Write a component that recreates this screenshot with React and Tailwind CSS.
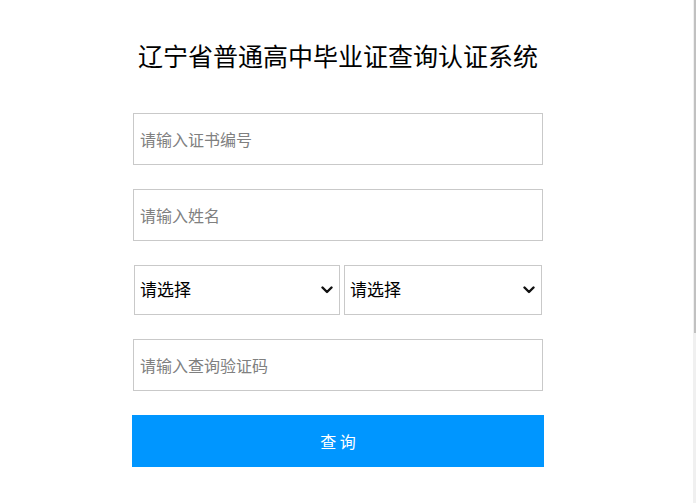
import { useState } from "react";

const FONT = { fontFamily: '"Microsoft YaHei", "Noto Sans CJK SC", "Noto Sans", sans-serif' };

function Chevron() {
  return (
    <svg
      className="pointer-events-none absolute right-[7px] top-1/2 -translate-y-1/2"
      width="12"
      height="8"
      viewBox="0 0 12 8"
      fill="none"
    >
      <path d="M1.5 1.5 L6 6 L10.5 1.5" stroke="#111" strokeWidth="2.4" strokeLinecap="round" strokeLinejoin="round" />
    </svg>
  );
}

export default function App() {
  const [sheng, setSheng] = useState("");
  const [shi, setShi] = useState("");

  return (
    <div className="min-h-[503px] bg-white" style={FONT}>
      <div className="pl-[132px] pt-[38px]">
        <div className="w-[412px]">
          <h1 className="h-[34px] text-center text-[25px] leading-[34px] font-normal text-black">辽宁省普通高中毕业证查询认证系统</h1>

          <form className="mt-[41px] flex flex-col gap-[24px]" onSubmit={(e) => e.preventDefault()}>
            <input
              type="text"
              placeholder="请输入证书编号"
              className="ml-px h-[52px] w-[410px] border border-[#c9c9c9] bg-white px-[6px] text-[16px] text-black outline-none placeholder:text-[#808080]"
            />
            <input
              type="text"
              placeholder="请输入姓名"
              className="ml-px h-[52px] w-[410px] border border-[#c9c9c9] bg-white px-[6px] text-[16px] text-black outline-none placeholder:text-[#808080]"
            />
            <div className="flex h-[50px]">
              <div className="relative ml-[2px] w-[206px]">
                <select
                  value={sheng}
                  onChange={(e) => setSheng(e.target.value)}
                  className="h-[50px] w-full appearance-none border border-[#c9c9c9] bg-white pb-[3px] pl-[5px] pr-[24px] text-[17px] text-black outline-none"
                >
                  <option value="">请选择</option>
                </select>
                <Chevron />
              </div>
              <div className="relative ml-[4px] w-[198px]">
                <select
                  value={shi}
                  onChange={(e) => setShi(e.target.value)}
                  className="h-[50px] w-full appearance-none border border-[#c9c9c9] bg-white pb-[3px] pl-[5px] pr-[24px] text-[17px] text-black outline-none"
                >
                  <option value="">请选择</option>
                </select>
                <Chevron />
              </div>
            </div>
            <input
              type="text"
              placeholder="请输入查询验证码"
              className="ml-px h-[52px] w-[410px] border border-[#c9c9c9] bg-white px-[6px] text-[16px] text-black outline-none placeholder:text-[#808080]"
            />
            <button type="submit" className="h-[52px] w-[412px] bg-[#0096ff] text-[16px] text-white">
              查 询
            </button>
          </form>
        </div>
      </div>

      {/* schmale Scrollleiste rechts */}
      <div className="fixed right-0 top-0 h-full w-[3px] bg-[#f0f0f0]">
        <div className="ml-auto h-[333px] w-[2px] bg-[#c1c1c1]" />
      </div>
    </div>
  );
}
